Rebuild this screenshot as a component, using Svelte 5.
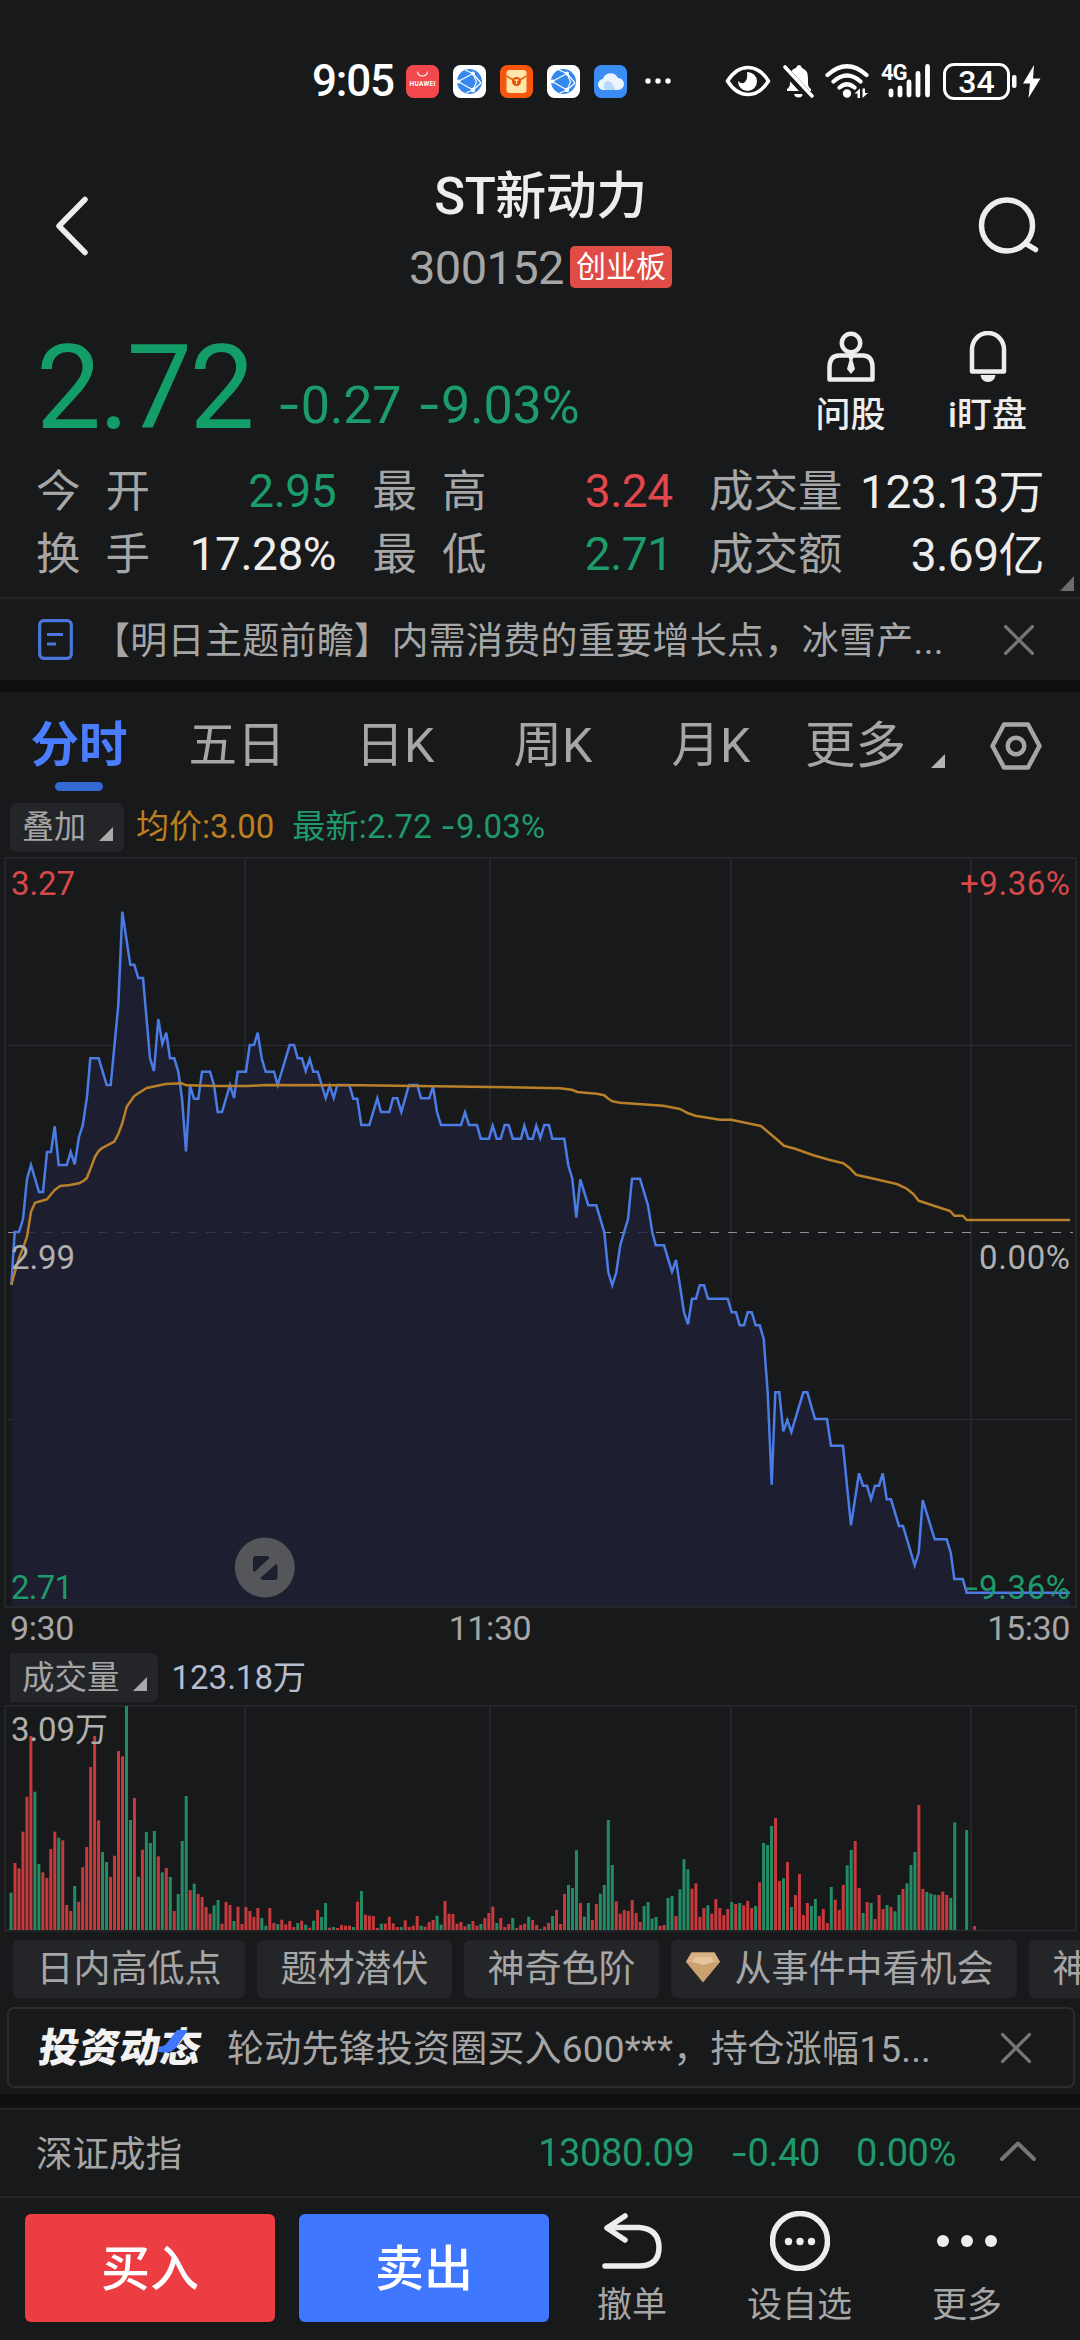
<script>
  // Intraday price line, traced in segments: [originX, originY, points in thirds of a pixel]
  const priceSegments = [
    [0, 860, '34,1275 44,1116 57,1116 69,1077 81,957 93,915 117,996 129,996 141,876 153,876 164,799 176,915 200,915 212,876 224,913 237,830 248,797 261,710 271,595 296,595 320,675 332,675 355,435 367,155 391,314 403,314 415,354 429,354 450,595 462,633 475,477 487,551 499,518 510,595 523,595 535,635 546,715 558,874 570,677 582,716 595,716 606,635 630,635 642,675 653,756 666,756 690,675 702,714 713,635 738,635 749,555 762,555 773,518 785,595 797,635 822,635 833,675 869,555 882,555 893,595 906,595 917,633 929,597 940,635 953,635 965,675 977,714 989,677 1001,714 1012,675 1048,675 1060,716 1072,716'],
    [360, 960, '4,495 28,495 52,415 63,456 88,456 99,415 112,415 124,456 147,375 172,375 183,415 208,415 219,379 231,456 243,495 303,495 315,457 327,495 351,495 362,536 387,536 398,497 410,536 422,536 434,495 446,495 458,536 483,536 493,497 505,536 518,536 529,497 541,534 553,495 567,495 577,536 613,536 625,616 637,656 649,773 661,658 685,736 709,736 733,817 745,937 757,976 769,937 781,855 804,777 816,656 840,656 864,736 877,817 887,856 912,856 936,935 948,900 972,1057'],
    [680, 1160, '12,457 24,493 36,416 48,416 59,376 72,376 84,416 143,416 155,457 168,457 179,496 192,496 203,457 215,457 227,496 239,496 251,537 263,697 275,974 286,697 298,697 310,814 322,780 334,816 370,697 382,697 405,777 441,777 453,857 489,857 513,1096 537,940 549,977 561,977 573,1018 585,977 597,977 608,940 620,1018 633,1018 657,1098 669,1098 704,1216 716,1178 728,1020 764,1138 800,1138 812,1178 823,1257 848,1257 860,1298 1170,1298'],
  ];
  const averageSegments = [
    [0, 860, '34,1275 45,1235 57,1195 69,1165 81,1130 93,1055 105,1028 141,1018 164,990 180,978 210,975 237,970 250,963 260,955 272,925 285,890 296,873 305,865 320,857 343,845 355,822 367,790 380,740 403,708 415,700 440,684 497,672 545,670 560,676 650,678 740,678 800,675 1080,676'],
    [360, 960, '170,378 390,381 600,385 635,389 652,396 710,401 733,406 745,416 757,424 780,428 910,437 960,447 985,460 1006,467 1080,479'],
    [680, 1160, '153,-121 243,-102 265,-83 290,-62 312,-43 345,-34 400,-14 450,0 490,10 510,25 528,44 585,57 650,72 680,86 700,102 716,122 810,153 823,167 848,167 860,180 1170,180'],
  ];
  const trace = (segments) =>
    segments
      .flatMap(([ox, oy, pts]) =>
        pts.split(' ').map((p) => {
          const [x, y] = p.split(',').map(Number);
          return `${(ox + x / 3).toFixed(1)},${(oy + y / 3).toFixed(1)}`;
        })
      )
      .join(' ');
  const priceLine = trace(priceSegments);
  const averageLine = trace(averageSegments);
  const priceArea = `11.3,1606 ${priceLine} 1070,1606`;

  // Volume bars: colour letter + top edge, one per minute; "-" is a minute without trades
  const morning = 'g1178 r1089 r1105 r995 r890 r708 g875 g1092 r1117 r1134 r1047 r995 g1013 r1021 r1215 r1233 g1158 r1205 r1102 r1041 r801 r708 r961 g1056 g1086 r1131 r1067 r753 r769 g618 g960 r894 g1130 r1049 g996 g1029 g993 r1069 g1117 r1104 g1131 r1233 g1182 g1023 g888 r1170 g1151 r1182 r1191 r1221 r1241 g1216 g1200 r1271 r1206 r1215 g1263 r1220 r1272 r1221 r1233 r1251 r1224 g1254 g1277 r1224 r1269 g1272 r1259 r1273 r1263 r1281 g1269 r1262 g1274 r1283 g1262 r1230 g1251 g1209 r1283 g1281 r1284 r1275 r1277 r1277 g1281 r1205 g1173 r1244 r1247 r1248 r1284 g1271 r1271 r1250 r1270 r1281 g1281 r1261 r1281 r1277 r1248 g1277 r1280 r1266 r1260 g1247 g1274 r1203 r1241 r1242 r1271 r1266 r1279 g1272 r1263 r1277 g1272 r1254 r1239 r1220 g1269 r1254 r1281 r1272 g1254 r1284 r1275 r1271 g1250 r1260 r1275';
  const afternoon = 'g987 r980 r969 g948 r930 r972 r882 g855 g864 g751 r909 g950 g909 r960 r912 g881 g855 g660 g795 r904 r941 r930 r933 r900 r939 r966 g918 g906 g956 g951 r978 r975 g894 g888 r948 g868 g778 g808 r866 r850 r951 r924 g916 r941 r897 r924 r945 r927 g906 r912 g909 r916 r903 r924 g918 r847 g729 g735 g678 r654 r843 g835 r786 g921 r885 r822 r945 r909 g918 g897 r948 r927 r969 g861 r899 r930 r855 g796 g750 r723 r864 g939 r906 g909 r957 r885 r927 g915 r921 g934 g885 r867 g850 g795 g756 r615 r867 g876 g881 g884 r885 r875 r885 g894 g667 - - g690 - r978';
  const read = (list, base) =>
    list.split(' ').map((v) => (v === '-' ? null : { up: v[0] === 'r', h: (base - Number(v.slice(1))) / 3 }));
  const bars = [...read(morning, 1290), ...read(afternoon, 990)]
    .map((b, i) => b && { ...b, x: 9.5 + i * 3.982 })
    .filter(Boolean);

  const gridX = [245, 490, 731, 971];
  const tools = ['日内高低点', '题材潜伏', '神奇色阶'];
  const tabs = ['五日', '日K', '周K', '月K'];
</script>

{#snippet cross()}
  <svg class="cross" viewBox="0 0 30 30"><path d="M1.5 1.5 28.5 28.5M28.5 1.5 1.5 28.5" /></svg>
{/snippet}

{#snippet globe()}
  <svg viewBox="0 0 33 33">
    <rect width="33" height="33" rx="7.5" fill="#fff" />
    <circle cx="16.500" cy="16.500" r="12.500" fill="#3488ee" />
    <g fill="none" stroke="#fff" stroke-width="1.200">
      <path d="M5 16.500 20 8.500 23.500 17 20 25 5 16.500M12 5 20 8.500 28 18M20 25 28 18M13 28 20 25" />
    </g>
    <g fill="#fff"><circle cx="5.500" cy="16.500" r="1.900" /><circle cx="20" cy="8.500" r="1.900" /><circle cx="20" cy="25" r="2.200" /></g>
  </svg>
{/snippet}

<div class="screen">
  <div class="status">
    <span class="time">9:05</span>
    <div class="apps">
      <svg viewBox="0 0 33 33">
        <rect width="33" height="33" rx="7.5" fill="#f2474c" />
        <path d="M11.500 6.500 Q12 11 16.500 11T21.500 6.500" fill="none" stroke="#fff" stroke-width="1.200" />
        <text x="16.500" y="21" text-anchor="middle" textLength="26" class="brand">HUAWEI</text>
      </svg>
      {@render globe()}
      <svg viewBox="0 0 33 33">
        <rect width="33" height="33" rx="7.500" fill="#f8560c" />
        <rect x="6.500" y="5" width="20" height="23" rx="3" fill="#ffe6a8" />
        <path d="M6.500 11 16.500 17 26.500 11" fill="none" stroke="#ee6a1c" stroke-width="2" />
        <circle cx="16.500" cy="16.500" r="4.500" fill="#e8500c" />
        <path d="M14.500 15h4M16.500 15v4" stroke="#ffe6a8" stroke-width="1.300" />
      </svg>
      {@render globe()}
      <svg viewBox="0 0 33 33">
        <rect width="33" height="33" rx="7.500" fill="#3b8df6" />
        <path d="M10 25a5.500 5.500 0 0 1-1-11 8 8 0 0 1 15-1 6 6 0 0 1 0 12z" fill="#eaf4ff" />
        <path d="M12 25a5 5 0 0 1 1-9q5-1 8 9z" fill="#b7d8fb" />
      </svg>
      <svg class="dots" viewBox="0 0 28 6"><circle cx="4" cy="3" r="2.700" /><circle cx="14" cy="3" r="2.700" /><circle cx="24" cy="3" r="2.700" /></svg>
    </div>
    <div class="system">
      <svg class="eye" viewBox="0 0 46 32">
        <path d="M2.500 16Q11 2.500 23 2.500T43.500 16Q35 29.500 23 29.500T2.500 16z" fill="none" stroke="#fff" stroke-width="3.600" stroke-linejoin="round" />
        <path d="M22 7a9.500 9.500 0 1 1-9 9q4 4 7 1t2-10z" fill="#fff" />
      </svg>
      <svg class="mute" viewBox="0 0 31 34">
        <path d="M4 27V25q3-2 3-6v-5q0-9 6-10 1-3 3-3t3 3q6 2 6 10v5q0 4 3 6v2z" fill="#fff" />
        <path d="M11 30h9q-1 3.500-4.500 3.500T11 30z" fill="#fff" />
        <path d="M1 5 27 33" stroke="#17191a" stroke-width="8" />
        <path d="M2 3 29 32" stroke="#fff" stroke-width="3.600" stroke-linecap="round" />
      </svg>
      <svg class="wifi" viewBox="0 0 45 34">
        <g fill="none" stroke="#fff" stroke-width="4.200" stroke-linecap="round">
          <path d="M2.500 11Q22 -6.500 41.500 11M8.500 17.500Q22 5.500 35.500 17.500M14.500 23.500Q22 17 29.500 23.500" />
        </g>
        <circle cx="22" cy="29.500" r="4.200" fill="#fff" />
        <path d="M29.500 29.500 35 24.500V34h-2.500V29.500zM37.500 24.500V34l5.500-5h-3v-4.500z" fill="#fff" />
      </svg>
      <div class="mobile">
        <span>4G</span>
        <svg class="signal" viewBox="0 0 50 34">
          <path d="M10 27v4M19 24v7M28 18v13M37 9.500v21.500M46.500 2.500v28.500" stroke="#fff" stroke-width="4.800" stroke-linecap="round" />
        </svg>
      </div>
      <div class="battery">34</div>
      <svg class="bolt" viewBox="0 0 30 37">
        <rect x="0" y="12" width="4.500" height="13" rx="2" fill="#fff" />
        <path d="M22 2 11 20.500h7L16.500 35 28.500 15.500H21z" fill="#fff" />
      </svg>
    </div>
  </div>

  <div class="header">
    <svg class="back" viewBox="0 0 34 60"><path d="M30 3.500 4 30 30 56.500" /></svg>
    <div class="names">
      <div class="title">ST新动力</div>
      <div class="code"><span>300152</span><b>创业板</b></div>
    </div>
    <svg class="search" viewBox="0 0 64 60"><circle cx="29" cy="28.500" r="25.500" /><path d="M47.500 46.500 57.500 52.500" /></svg>
  </div>

  <div class="quote">
    <div class="last">2.72</div>
    <div class="change"><span><i>-</i>0.27</span><span><i>-</i>9.03%</span></div>
    <div class="action">
      <svg viewBox="0 0 50 52">
        <circle cx="25" cy="12" r="9.200" /><path d="M3.500 48.500V37Q3.500 24.500 13 24.500H37Q46.500 24.500 46.500 37V48.500z" />
        <path class="solid" d="M22 25h6l-1.500 4L29 38l-4 5-4-5 2.500-9z" />
      </svg>
      <span>问股</span>
    </div>
    <div class="action">
      <svg viewBox="0 0 50 52">
        <path d="M9 40.500V18.500a16 16.500 0 0 1 32 0V40.500z" /><path class="solid" d="M17.500 44h15q-1 7-7.500 7t-7.500-7z" />
      </svg>
      <span>i盯盘</span>
    </div>
  </div>

  <div class="stats">
    <div class="cell"><em class="wide">今开</em><span class="down">2.95</span></div>
    <div class="cell"><em class="wide">最高</em><span class="up">3.24</span></div>
    <div class="cell cjk"><em>成交量</em><span>123.13万</span></div>
    <div class="cell"><em class="wide">换手</em><span>17.28%</span></div>
    <div class="cell"><em class="wide">最低</em><span class="down">2.71</span></div>
    <div class="cell cjk"><em>成交额</em><span>3.69亿</span></div>
    <svg class="expand" viewBox="0 0 14 15"><path d="M14 0V15H0z" fill="#6b6c6e" /></svg>
  </div>

  <div class="news">
    <svg class="doc" viewBox="0 0 35 41"><rect x="1.700" y="1.700" width="31.600" height="37.600" rx="4" /><path d="M9 15.500h16M9 25h9" /></svg>
    <span>【明日主题前瞻】内需消费的重要增长点，冰雪产...</span>
    {@render cross()}
  </div>
  <div class="band"></div>

  <div class="tabs">
    <div class="tab active">分时</div>
    {#each tabs as t}<div class="tab">{t}</div>{/each}
    <div class="tab more">更多<svg viewBox="0 0 14 14"><path d="M14 0V14H0z" fill="#b4b4b4" /></svg></div>
    <svg class="gear" viewBox="0 0 52 48"><path d="M14 2.500H38L49.500 24 38 45.500H14L2.500 24z" /><circle cx="26" cy="24" r="8.300" /></svg>
  </div>

  <div class="legend">
    <div class="pill">叠加<svg viewBox="0 0 14 14"><path d="M14 0V14H0z" fill="#a9a9a9" /></svg></div>
    <span class="avg">均价:3.00</span>
    <span class="now">最新:2.72 <i>-</i>9.03%</span>
  </div>

  <svg class="chart" viewBox="0 857 1080 751">
    <g class="grid">
      <rect x="5" y="858" width="1071" height="749" />
      {#each gridX as x}<path d="M{x} 858V1607" />{/each}
      <path class="thin" d="M8 1045.500H1073M8 1419.500H1073" />
    </g>
    <path class="zero" d="M8 1232.500H1073" />
    <polygon class="area" points={priceArea} />
    <polyline class="price" points={priceLine} />
    <polyline class="average" points={averageLine} />
    <g class="scale">
      <text x="11" y="894.500" textLength="64" class="up">3.27</text>
      <text x="11" y="1268.500" textLength="64">2.99</text>
      <text x="11" y="1598.500" textLength="62" class="down">2.71</text>
      <text x="1070" y="894.500" textLength="110" text-anchor="end" class="up">+9.36%</text>
      <text x="1070" y="1268.500" textLength="91" text-anchor="end">0.00%</text>
      <text x="979" y="1598.500" textLength="91" class="down">9.36%</text>
      <text x="966" y="1598.500" textLength="12" lengthAdjust="spacingAndGlyphs" class="down">-</text>
    </g>
    <g opacity=".95">
      <circle cx="264.800" cy="1567.500" r="30" fill="#58595c" />
      <path d="M255 1556h13l1.500 2-15 14-1.500-1.500V1558zM276 1564l1.500 1.500V1578l-1.500 2h-14l-1.500-2z" fill="#1d1e2f" />
    </g>
  </svg>

  <div class="hours"><span>9:30</span><span>11:30</span><span>15:30</span></div>

  <div class="legend volhead">
    <div class="pill">成交量<svg viewBox="0 0 14 14"><path d="M14 0V14H0z" fill="#a9a9a9" /></svg></div>
    <span class="vol">123.18万</span>
  </div>

  <svg class="volume" viewBox="0 1705 1080 227">
    <g class="grid">
      <rect x="5" y="1706" width="1071" height="224.500" />
      {#each gridX as x}<path d="M{x} 1706V1930" />{/each}
    </g>
    {#each bars as b}
      <rect class={b.up ? 'rise' : 'fall'} x={b.x} y={1930 - b.h} width="3" height={b.h} />
    {/each}
    <g class="scale"><text x="11" y="1740.500" textLength="97">3.09万</text></g>
  </svg>

  <div class="tools">
    {#each tools as t}<div class="tool">{t}</div>{/each}
    <div class="tool">
      <svg viewBox="0 0 34 31">
        <path d="M5.500 0.500H28.500L34 10 17 30.500 0 10z" fill="#cba071" /><path d="M5.500 0.500H28.500L34 10H0z" fill="#d9b083" /><path d="M9 5h16l3 5-11 3L6 10z" fill="#e2c49d" />
      </svg>从事件中看机会
    </div>
    <div class="tool">神奇</div>
  </div>

  <div class="feed">
    <div class="logo"><b>投资动态</b><svg viewBox="0 0 30 24"><path d="M0 23 1 17.500Q7 18 10 12.500L19 1H30L18.500 18Q14 24 7 23.500z" /></svg></div>
    <span>轮动先锋投资圈买入600***，持仓涨幅15...</span>
    {@render cross()}
  </div>
  <div class="band low"></div>

  <div class="index">
    <span class="name">深证成指</span>
    <span class="v1">13080.09</span><span class="v2"><i>-</i>0.40</span><span>0.00%</span>
    <svg viewBox="0 0 36 20"><path d="M2 18 18 2.500 34 18" /></svg>
  </div>

  <div class="dock">
    <div class="btn buy">买入</div>
    <div class="btn sell">卖出</div>
    <div class="item">
      <svg viewBox="0 0 60 60"><path d="M23 5 5 17 23 29" /><path d="M6 16.500H37Q57 18 57 36.500T37 55H3" /></svg>
      <span>撤单</span>
    </div>
    <div class="item middle">
      <svg viewBox="0 0 60 60"><circle cx="30" cy="30" r="27.500" /><g class="fill"><circle cx="18.500" cy="30.500" r="3.700" /><circle cx="30" cy="30.500" r="3.700" /><circle cx="41.500" cy="30.500" r="3.700" /></g></svg>
      <span>设自选</span>
    </div>
    <div class="item">
      <svg viewBox="0 0 60 60"><g class="fill"><circle cx="6" cy="30" r="6" /><circle cx="30" cy="30" r="6" /><circle cx="54" cy="30" r="6" /></g></svg>
      <span>更多</span>
    </div>
  </div>
</div>

<style>
  :global(body) { background: #17191a; }
  .screen {
    width: 1080px; height: 2340px; overflow: hidden; background: #17191a; color: #ededed;
    font-family: Roboto, "Noto Sans CJK SC", sans-serif; display: flex; flex-direction: column;
  }
  .screen > * { flex: none; box-sizing: border-box; }
  svg { display: block; flex: none; }
  i { font-family: Inter, sans-serif; font-style: normal; line-height: 1; }
  .up { color: #e2474b; fill: #d9484b; }
  .down { color: #1c9c6b; fill: #1f9a6b; }

  .status { height: 162px; padding: 0 38px 0 312px; display: flex; align-items: center; color: #fff; }
  .time { width: 94px; font-size: 44px; font-weight: 500; letter-spacing: -1.2px; }
  .apps { display: flex; align-items: center; gap: 14px; width: 320px; }
  .apps svg { width: 33px; height: 33px; }
  .apps .dots { width: 28px; height: 6px; fill: #fff; margin-left: 3px; }
  .brand { font-size: 6.500px; font-weight: 700; fill: #fff; }
  .system { display: flex; align-items: center; }
  .eye { width: 46px; height: 32px; }
  .mute { width: 31px; height: 34px; margin-left: 12px; }
  .wifi { width: 45px; height: 34px; margin-left: 11px; }
  .mobile { position: relative; width: 50px; height: 34px; margin-left: 11px; }
  .mobile span { position: absolute; left: 0; top: -4px; font-size: 22px; line-height: 26px; font-weight: 700; letter-spacing: -1px; }
  .signal { width: 50px; height: 34px; }
  .battery {
    box-sizing: border-box; width: 67px; height: 37px; border: 3px solid #fff; border-radius: 11px;
    margin-left: 12px; font-size: 32px; font-weight: 500; line-height: 32px; text-align: center;
  }
  .bolt { width: 30px; height: 37px; margin-left: 2px; }

  .header { height: 150px; display: flex; justify-content: space-between; padding: 0 38px 0 55px; }
  .back { width: 34px; height: 60px; margin-top: 34px; }
  .search { width: 64px; height: 60px; margin-top: 35px; }
  .back path, .search circle, .search path { fill: none; stroke: #ededed; stroke-width: 5.500; stroke-linecap: round; stroke-linejoin: round; }
  .names { display: flex; flex-direction: column; align-items: center; padding-left: 14px; }
  .title { font-size: 51px; font-weight: 500; line-height: 70px; margin-top: 0; letter-spacing: -0.500px; }
  .code { display: flex; align-items: center; height: 70px; gap: 6px; }
  .code span { font-size: 47px; color: #a6a6a6; letter-spacing: -0.600px; }
  .code b { font-size: 30px; font-weight: 400; line-height: 42px; height: 42px; padding: 0 6px; background: #e04b45; border-radius: 5px; color: #fff; }

  .quote { height: 142px; display: flex; padding: 0 24px 0 36px; }
  .last { width: 241px; font-size: 116px; line-height: 152px; letter-spacing: -2.500px; color: #139e69; }
  .change { flex: 1; display: flex; gap: 16px; padding-top: 59px; font-size: 52px; line-height: 70px; color: #1c9c6b; letter-spacing: -0.200px; }
  .action { width: 137px; display: flex; flex-direction: column; align-items: center; padding-top: 19px; }
  .action svg { width: 50px; height: 52px; }
  .action path, .action circle { fill: none; stroke: #ededed; stroke-width: 4.500; stroke-linejoin: round; }
  .action .solid { fill: #ededed; stroke: none; }
  .action span { font-size: 35px; line-height: 48px; margin-top: 9px; font-weight: 500; }

  .stats {
    height: 145px; padding: 5px 36px 0 36px; display: grid; position: relative;
    grid-template-columns: 300px 300px 335px; grid-template-rows: 63px 63px; column-gap: 36.500px;
    border-bottom: 2px solid #232426;
  }
  .cell { display: flex; justify-content: space-between; align-items: center; font-size: 46px; white-space: nowrap; }
  .cell em { font-style: normal; font-size: 44.500px; color: #a6a6a6; margin-bottom: 7px; }
  .cell .wide { letter-spacing: 25px; }
  .cell span { letter-spacing: -0.500px; }
  .cjk span { margin-bottom: 5px; }
  .expand { position: absolute; right: 6px; bottom: 6px; width: 14px; height: 15px; }

  .news { height: 81px; display: flex; align-items: center; padding-left: 38px; font-size: 37px; color: #a6a6a6; white-space: nowrap; }
  .news .doc { width: 35px; height: 41px; margin-right: 20px; }
  .doc rect, .doc path { fill: none; stroke: #4a76dc; stroke-width: 3.200; }
  .news span { width: 911px; letter-spacing: 0.300px; margin-bottom: 3px; }
  .cross { width: 30px; height: 30px; }
  .cross path { fill: none; stroke: #757677; stroke-width: 3.200; stroke-linecap: round; }
  .band { height: 12px; background: #0f1012; }

  .tabs { height: 110px; display: flex; padding-top: 16px; font-size: 48.500px; line-height: 76px; color: #a6a6a6; }
  .tab { width: 158px; text-align: center; }
  .tab.active { color: #4a7dff; font-weight: 700; display: flex; flex-direction: column; align-items: center; }
  .tab.active::after { content: ""; width: 48px; height: 9px; border-radius: 5px; background: #3468d2; margin-top: -2px; }
  .tab.more { width: 142px; margin-left: 15px; font-size: 50.500px; display: flex; gap: 25px; }
  .more svg { width: 14px; height: 14px; margin-top: 46px; }
  .gear { width: 52px; height: 48px; margin: 14px 0 0 43px; }
  .gear path, .gear circle { fill: none; stroke: #a6a6a6; stroke-width: 4.500; stroke-linejoin: round; }

  .legend { height: 55px; padding: 1px 0 0 10px; display: flex; align-items: flex-start; font-size: 33px; line-height: 47px; }
  .pill { box-sizing: border-box; height: 49px; padding: 0 11px 0 12px; background: #242529; border-radius: 7px; display: flex; align-items: center; gap: 13px; color: #a6a6a6; font-size: 32px; }
  .pill svg { width: 14px; height: 14px; margin-top: 13px; }
  .avg { color: #bd7f1f; margin-left: 12px; }
  .now { color: #1f9a6b; margin-left: 18px; letter-spacing: 0.200px; }

  .chart { width: 1080px; height: 751px; }
  .grid rect, .grid path { fill: none; stroke: #252629; stroke-width: 2; }
  .grid .thin { stroke-width: 1.200; stroke: #2c2d30; }
  .zero { stroke: #8d8f99; stroke-width: 1.200; stroke-dasharray: 9 9; }
  .area { fill: #1f1f34; fill-opacity: 0.800; }
  .price { fill: none; stroke: #4b7ce6; stroke-width: 2.500; }
  .average { fill: none; stroke: #b88028; stroke-width: 2.500; stroke-linejoin: round; }
  .scale text { font-size: 33px; }
  .scale text:not(.up):not(.down) { fill: #b0b0b0; }

  .hours { height: 43px; display: flex; padding: 1px 10px 0 10px; font-size: 34px; line-height: 38px; color: #a6a6a6; letter-spacing: -0.400px; }
  .hours span:nth-child(1) { width: 390px; }
  .hours span:nth-child(2) { width: 180px; text-align: center; }
  .hours span:nth-child(3) { flex: 1; text-align: right; }
  .volhead { height: 54px; padding-top: 2px; line-height: 50px; }
  .volhead .pill { border-radius: 0 7px 7px 0; font-size: 32.500px; }
  .vol { color: #b6bdd0; margin-left: 14px; font-size: 33px; }
  .volume { width: 1080px; height: 227px; }
  .rise { fill: #c6393d; }
  .fall { fill: #228d65; }

  .tools { height: 74px; padding: 8px 0 0 13px; display: flex; gap: 12px; overflow: hidden; white-space: nowrap; }
  .tool { flex: none; box-sizing: border-box; height: 58px; line-height: 57px; padding: 0 23.500px; border-radius: 6px; background: #242529; color: #a6a6a6; font-size: 37px; display: flex; align-items: center; }
  .tool svg { width: 34px; height: 31px; margin: 0 15px 4px -9px; }

  .feed { height: 81px; margin: 1px 5px 0 7px; border: 2px solid #2b2c2e; border-radius: 7px; display: flex; align-items: center; padding-left: 30px; font-size: 37px; color: #a6a6a6; white-space: nowrap; }
  .logo { position: relative; width: 162px; margin: 3px 26px 0 0; color: #f2f2f2; }
  .logo b { display: block; font-size: 40px; font-weight: 900; line-height: 44px; letter-spacing: 0.500px; transform: skewX(-9deg); }
  .logo svg { position: absolute; left: 119px; top: 2px; width: 30px; height: 24px; }
  .logo path { fill: #3f78ff; }
  .feed span { width: 774px; letter-spacing: 0.200px; margin-bottom: 3px; }
  .band.low { margin-top: 6px; height: 13px; }

  .index { height: 90px; border-top: 2px solid #232426; border-bottom: 2px solid #232426; display: flex; align-items: center; padding: 0 44px 0 36px; font-size: 38px; color: #1f9a6b; margin-top: 1px; letter-spacing: -0.400px; }
  .index .name { flex: 1; color: #a6a6a6; font-size: 36.500px; letter-spacing: 0; margin-bottom: 3px; }
  .v1, .v2 { margin-right: 36px; }
  .index svg { width: 36px; height: 20px; margin: 0 0 4px 44px; }
  .index path { fill: none; stroke: #757677; stroke-width: 4; stroke-linecap: round; stroke-linejoin: round; }

  .dock { flex: 1 !important; display: flex; padding: 16px 0 0 25px; }
  .btn { width: 250px; height: 108px; margin-right: 24px; border-radius: 6px; font-size: 49px; font-weight: 500; line-height: 112px; text-align: center; color: #fff; }
  .buy { background: #eb3d42; }
  .sell { background: #3f78ff; }
  .item { width: 166px; display: flex; flex-direction: column; align-items: center; color: #a6a6a6; font-size: 35px; }
  .item:nth-child(3) { width: 118px; }
  .middle { width: 217px; }
  .item:last-child { width: 118px; }
  .item svg { width: 60px; height: 60px; margin-top: -3px; }
  .item span { line-height: 48px; margin-top: 11px; }
  .item circle, .item path { fill: none; stroke: #ededed; stroke-width: 5.500; stroke-linecap: round; stroke-linejoin: round; }
  .item .fill circle { fill: #ededed; stroke: none; }
</style>
